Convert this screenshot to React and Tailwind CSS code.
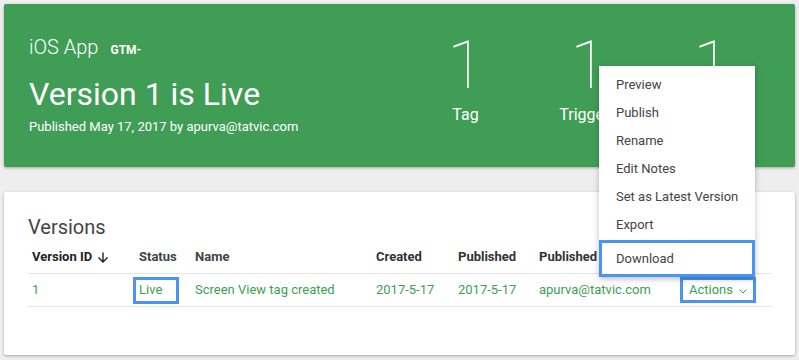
import React from 'react';

const stats = [
  { count: 1, label: 'Tag' },
  { count: 1, label: 'Triggers' },
  { count: 1, label: 'Variables' },
];

const menuItems = ['Preview', 'Publish', 'Rename', 'Edit Notes', 'Set as Latest Version', 'Export'];

const SortArrow = () => (
  <svg width="12" height="11" viewBox="0 0 12 11" className="ml-[5px]">
    <path d="M6 0.5 V10 M1.5 5.5 L6 10 L10.5 5.5" fill="none" stroke="#222" strokeWidth="1.4" />
  </svg>
);

const Chevron = () => (
  <svg width="8" height="5" viewBox="0 0 8 5" className="ml-[6px] mt-[2px]">
    <path d="M0.5 0.5 L4 4 L7.5 0.5" fill="none" stroke="#3d9f52" strokeWidth="1" />
  </svg>
);

const App = () => {
  return (
    <div className="relative w-[799px] h-[360px] overflow-hidden bg-[#eeeeee] p-1 font-['Roboto',sans-serif]">
      {/* live version header */}
      <div className="flex h-[163px] rounded-[2px] bg-[#3f9d56] text-white shadow-[0_1px_3px_rgba(0,0,0,0.3)]">
        <div className="pl-[25px] pt-[31px]">
          <div className="flex items-baseline text-[20px] leading-[24px] font-light">
            iOS App
            <span className="ml-[12px] text-[12px] font-bold">GTM-</span>
          </div>
          <div className="mt-[14px] text-[32px] leading-[36px]">Version 1 is Live</div>
          <div className="mt-[6px] text-[13px] leading-[18px]">Published May 17, 2017 by apurva@tatvic.com</div>
        </div>
        <div className="ml-auto flex pr-[22px] pt-[29px]">
          {stats.map((s) => (
            <div key={s.label} className="w-[123px] text-center">
              <div className="text-[66px] leading-[66px] font-thin">{s.count}</div>
              <div className="mt-[6px] text-[16px] leading-[20px]">{s.label}</div>
            </div>
          ))}
        </div>
      </div>

      {/* versions table */}
      <div className="mt-[25px] h-[163px] rounded-[2px] bg-white px-6 pt-[21px] shadow-[0_1px_3px_rgba(0,0,0,0.3)]">
        <div className="text-[20px] leading-[28px] text-[#444]">Versions</div>
        <div className="grid grid-cols-[107px_56px_181px_82px_81px_1fr_100px] border-b border-[#e4e4e4] py-[7px] text-[13px] leading-[18px] font-bold text-[#444]">
          <div className="flex items-center pl-1 text-[#222]">
            Version ID
            <SortArrow />
          </div>
          <div className="pl-1">Status</div>
          <div className="pl-1">Name</div>
          <div className="pl-1 text-[#333]">Created</div>
          <div className="pl-1 text-[#333]">Published</div>
          <div className="pl-1 text-[#333]">Published by</div>
          <div></div>
        </div>
        <div className="grid h-[33px] grid-cols-[107px_56px_181px_82px_81px_1fr_100px] items-center border-b border-[#e4e4e4] text-[13px] leading-[18px] text-[#3d9f52]">
          <div className="pl-1">1</div>
          <div className="pl-1">
            <span className="-ml-[6px] block h-[27px] w-[46px] border-[3px] border-[#4a94f5] pl-[3px] leading-[20px]">Live</span>
          </div>
          <div className="pl-1">Screen View tag created</div>
          <div className="pl-1">2017-5-17</div>
          <div className="pl-1">2017-5-17</div>
          <div className="pl-1">apurva@tatvic.com</div>
          <div className="flex justify-end pr-[15px]">
            <span className="flex h-[26px] w-[76px] items-center border-[3px] border-[#4a94f5] pl-[6px]">
              Actions
              <Chevron />
            </span>
          </div>
        </div>
      </div>

      {/* actions menu */}
      <div className="absolute left-[599px] top-[66px] w-[156px] bg-white pt-[5px] text-[13px] text-[#444] shadow-[0_2px_6px_rgba(0,0,0,0.25)]">
        {menuItems.map((item) => (
          <div key={item} className="h-[28px] pl-[17px] leading-[28px]">
            {item}
          </div>
        ))}
        <div className="mt-[1px] h-[37px] border-[3px] border-[#4a94f5] pl-[14px] leading-[31px]">Download</div>
      </div>
    </div>
  );
};

export default App;
